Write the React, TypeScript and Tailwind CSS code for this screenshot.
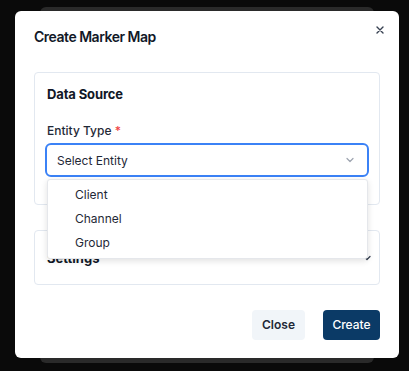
import React from "react";

export default function App() {
  return (
    <div className="relative h-[371px] w-[409px] overflow-hidden bg-[#0a0a0a]" style={{ fontFamily: "Inter, 'Noto Sans', sans-serif" }}>
      <div className="absolute left-[40px] top-[7px] h-[356px] w-[334px] rounded-[6px] bg-[#2a2a2a]" />
      <div className="absolute left-[15px] top-[11px] flex h-[347px] w-[384px] flex-col rounded-[6px] bg-white px-[19px] pt-[17px]">
        <div className="flex items-start justify-between">
          <h2 className="text-[14px] font-semibold leading-[18px] tracking-[-0.035em] text-[#111827]">Create Marker Map</h2>
          <svg className="mr-[-5px] mt-[-3px]" width="10" height="10" viewBox="0 0 10 10" fill="none" stroke="#374151" strokeWidth="1.4" strokeLinecap="round">
            <path d="M2 2L8 8M8 2L2 8" />
          </svg>
        </div>
        <div className="mt-[26px] h-[133px] rounded-[4px] border border-[#e2e8f0] px-[12px] pt-[13px]">
          <div className="text-[13px] font-bold leading-[16px] tracking-[-0.01em] text-[#111827]">Data Source</div>
          <div className="mt-[21px] text-[12px] font-medium leading-[15px] text-[#1f2937]">
            Entity Type <span className="text-[#ef4444]">*</span>
          </div>
          <div className="mt-[5px] flex h-[34px] w-[324px] items-center justify-between rounded-[6px] border-2 border-[#3b82f6] ml-[-2px] pl-[10px] pr-[12px]">
            <span className="text-[12px] leading-[15px] text-[#1f2937]">Select Entity</span>
            <svg width="10" height="10" viewBox="0 0 10 10" fill="none" stroke="#9ca3af" strokeWidth="1.2" strokeLinecap="round" strokeLinejoin="round">
              <path d="M2 3.5L5 6.5L8 3.5" />
            </svg>
          </div>
        </div>
        <div className="mt-[25px] flex h-[55px] items-center justify-between rounded-[4px] border border-[#e2e8f0] pl-[12px] pr-[7px]">
          <div className="text-[13px] font-bold leading-[16px] text-[#111827]">Settings</div>
          <svg width="10" height="10" viewBox="0 0 10 10" fill="none" stroke="#374151" strokeWidth="1.3" strokeLinecap="round" strokeLinejoin="round">
            <path d="M2 3.5L5 6.5L8 3.5" />
          </svg>
        </div>
        <div className="mt-[25px] flex justify-end gap-[18px]">
          <button className="h-[30px] w-[53px] rounded-[4px] bg-[#f1f5f9] text-[12px] font-semibold text-[#1f2937]">Close</button>
          <button className="h-[30px] w-[57px] rounded-[4px] bg-[#0b3a66] text-[12px] font-medium text-white">Create</button>
        </div>
      </div>
      <div className="absolute left-[47px] top-[179px] flex w-[321px] flex-col rounded-[3px] border border-[#e5e7eb] bg-white py-[3px] shadow-[0_2px_6px_rgba(0,0,0,0.12)]">
        {["Client", "Channel", "Group"].map((t) => (
          <div key={t} className="flex h-[24px] items-center pl-[27px] text-[12px] text-[#1f2937]">{t}</div>
        ))}
      </div>
    </div>
  );
}
